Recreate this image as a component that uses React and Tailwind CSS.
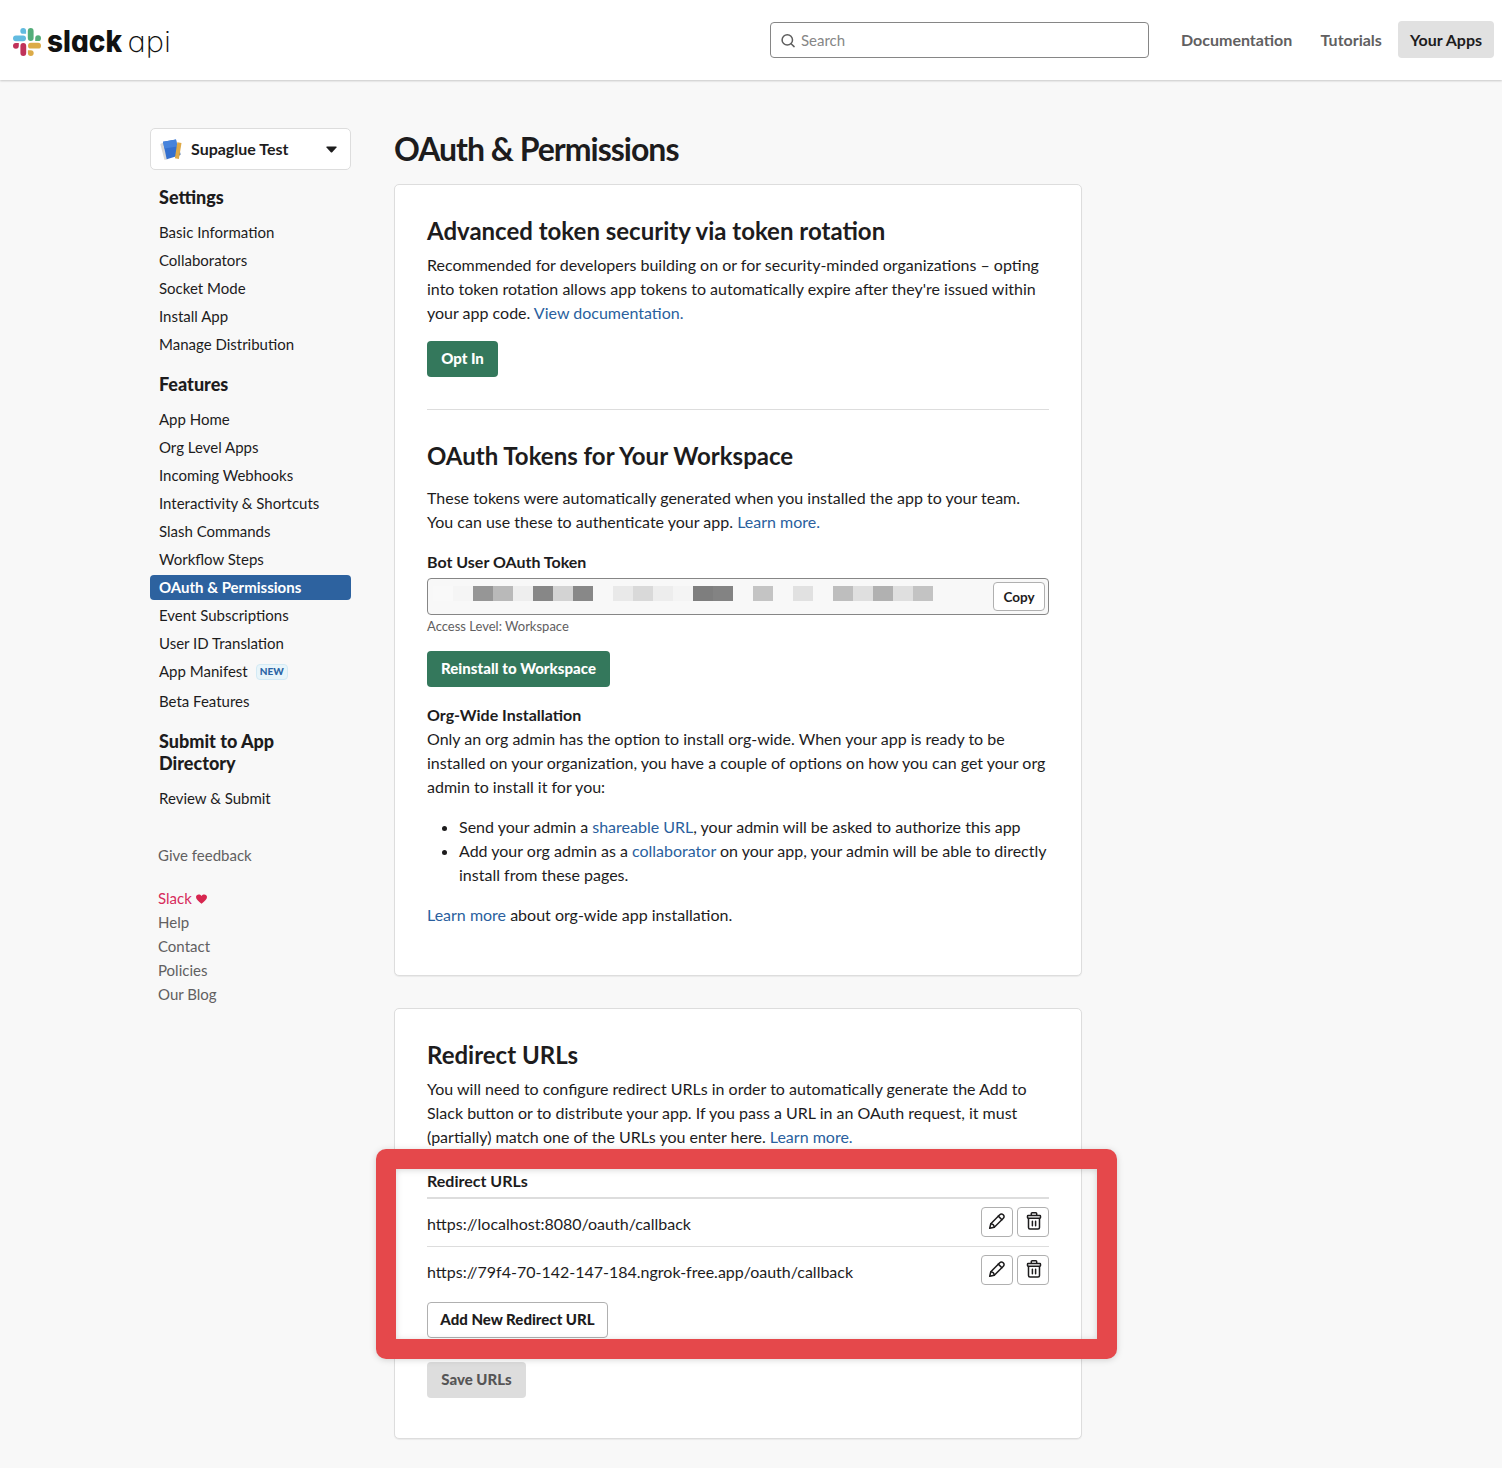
import React from "react";

const LINK = "text-[#2a5f9e]";

function Logo() {
  return (
    <div className="flex h-20 w-[180px] shrink-0 items-center pl-[13px]">
      <svg className="mt-1 h-[28px] w-[28px] shrink-0" viewBox="0 0 28 28">
        <g fill="#62bbe0">
          <rect x="0" y="7.4" width="13" height="5.8" rx="2.9" />
          <path d="M10.2 0a2.9 2.9 0 0 1 2.9 2.9v2.9h-2.9a2.9 2.9 0 0 1 0-5.8z" />
        </g>
        <g fill="#54ad7a">
          <rect x="14.8" y="0" width="5.8" height="13" rx="2.9" />
          <path d="M28 10.2a2.9 2.9 0 0 1-2.9 2.9h-2.9v-2.9a2.9 2.9 0 0 1 5.8 0z" />
        </g>
        <g fill="#dcab48">
          <rect x="15" y="14.8" width="13" height="5.8" rx="2.9" />
          <path d="M17.8 28a2.9 2.9 0 0 1-2.9-2.9v-2.9h2.9a2.9 2.9 0 0 1 0 5.8z" />
        </g>
        <g fill="#c0325a">
          <rect x="7.4" y="15" width="5.8" height="13" rx="2.9" />
          <path d="M0 17.8a2.9 2.9 0 0 1 2.9-2.9h2.9v2.9a2.9 2.9 0 0 1-5.8 0z" />
        </g>
      </svg>
      <svg className="h-[50px] w-[135px] shrink-0 font-['Inter',sans-serif] [font-feature-settings:'cv11']" viewBox="0 0 135 50">
        <text x="6" y="36.500" textLength="75" lengthAdjust="spacingAndGlyphs" fontWeight="800" fontSize="30" fill="#111">slack</text>
        <text x="86.500" y="36.500" textLength="43.500" lengthAdjust="spacingAndGlyphs" fontWeight="200" fontSize="29" fill="#111">api</text>
      </svg>
    </div>
  );
}

function Header() {
  return (
    <header className="flex h-20 items-center bg-white shadow-[0_1px_2px_rgba(0,0,0,0.2)]">
      <Logo />
      <div className="ml-auto flex h-9 w-[379px] items-center rounded border border-[#868686] bg-white pl-[10px]">
        <svg className="h-[15px] w-[15px]" viewBox="0 0 15 15" fill="none" stroke="#5e5e5e" strokeWidth="1.5" strokeLinecap="round">
          <circle cx="6.3" cy="6.9" r="5.2" />
          <path d="M10.1 10.8l3 2.800" />
        </svg>
        <span className="ml-[5px] text-[15px] text-[#868686]">Search</span>
      </div>
      <nav className="mr-2 ml-8 flex items-center text-base font-bold text-[#616061]">
        <span className="w-[111px] whitespace-nowrap">Documentation</span>
        <span className="ml-[28.5px] w-[61.5px] whitespace-nowrap">Tutorials</span>
        <span className="mb-px ml-4 flex h-[37px] w-24 items-center justify-center rounded bg-[#e1e1e1] pt-px whitespace-nowrap text-[#1d1c1d]">Your Apps</span>
      </nav>
    </header>
  );
}

function NavGroup({ title, items }) {
  return (
    <>
      <h3 className="pl-[9px] text-[18px] leading-[22px] font-black">{title}</h3>
      <ul className="mt-3 mb-4 text-[15px] leading-[25px]">
        {items.map((item) => (
          <li key={item} className={item === "OAuth & Permissions" ? "mb-[3px] rounded bg-[#2d629f] pl-[9px] font-bold text-white" : item === "App Manifest" ? "mb-[5px] flex items-center pl-[9px]" : "mb-[3px] pl-[9px]"}>
            {item}
            {item === "App Manifest" && (
              <span className="ml-2 flex h-4 w-8 items-center justify-center rounded border border-[#d3eaf5] bg-[#e8f5fa] text-[10px] font-black text-[#2a64a5]">NEW</span>
            )}
          </li>
        ))}
      </ul>
    </>
  );
}

function Sidebar() {
  return (
    <aside className="w-[201px] shrink-0">
      <div className="flex h-[42px] items-center rounded-[5px] border border-[#ddd] bg-white pl-[9px]">
        <svg className="mt-px h-[22px] w-[22px]" viewBox="0 0 22 22">
          <path d="M0.300 5l3-1.500 5 16.500-3.800 1z" fill="#d8d8d8" />
          <path d="M18 5l2.600 10.500-1 1-3-1z" fill="#4d6f9e" />
          <path d="M3 2.700L16 0.500 19 16.500 6.700 20.300z" fill="#3470cf" />
          <path d="M3 2.700L16 0.500 17.300 7.500 4.400 9.500z" fill="#4683dc" />
          <path d="M17.300 3.300l4.200 0.600-2.600 16-4-0.700z" fill="#dfaa48" />
        </svg>
        <span className="ml-[9px] text-base font-bold">Supaglue Test</span>
        <svg className="mt-px mr-[13px] ml-auto h-[7px] w-[11px]" viewBox="0 0 11 7"><path d="M1 .5h9q1 .2.500 1L6.200 6.200q-.7.700-1.400 0L.5 1.500Q0 .7 1 .5z" fill="#1d1c1d" /></svg>
      </div>
      <div className="mt-4">
        <NavGroup title="Settings" items={["Basic Information", "Collaborators", "Socket Mode", "Install App", "Manage Distribution"]} />
        <NavGroup title="Features" items={["App Home", "Org Level Apps", "Incoming Webhooks", "Interactivity & Shortcuts", "Slash Commands", "Workflow Steps", "OAuth & Permissions", "Event Subscriptions", "User ID Translation", "App Manifest", "Beta Features"]} />
        <NavGroup title={<>Submit to App<br />Directory</>} items={["Review & Submit"]} />
      </div>
      <div className="mt-8 pl-2 text-[15px] leading-6 text-[#616061]">
        <p>Give feedback</p>
        <p className="mt-[19px] flex items-center text-[#d72b5c]">
          Slack
          <svg className="mt-px ml-1 h-[10px] w-[11px]" viewBox="0 0 11 10"><path d="M5.500 9.700C2.500 7.200 0 5.400 0 3 0 .2 3.800-.5 5.500 2 7.200-.5 11 .2 11 3c0 2.400-2.500 4.200-5.500 6.700z" fill="#d7264f" /></svg>
        </p>
        <p>Help</p>
        <p>Contact</p>
        <p>Policies</p>
        <p>Our Blog</p>
      </div>
    </aside>
  );
}

function Button({ className, children }) {
  return <div className={"flex h-9 items-center justify-center rounded pb-[2px] text-[15px] font-black whitespace-nowrap " + className}>{children}</div>;
}

const BLOCKS = ["#f9f9f9", "#f5f5f5", "#969696", "#b9b9b9", "#eeeeee", "#878787", "#d3d3d3", "#888888", "#f8f8f8", "#e9e9e9", "#d9d9d9", "#ededed", "#f4f4f4", "#7e7e7e", "#838383", "#f8f8f8", "#c4c4c4", "#f8f8f8", "#e1e1e1", "#f8f8f8", "#bebebe", "#dfdfdf", "#b1b1b1", "#dfdfdf", "#c3c3c3"];

function IconButtons() {
  return (
    <div className="ml-auto flex gap-1">
      <div className="flex h-[30px] w-8 items-center justify-center rounded border border-[#b0b0b0]">
        <svg className="mb-[2px] h-[18px] w-[18px]" viewBox="0 0 18 18" fill="none" stroke="#1d1c1d" strokeWidth="1.500" strokeLinejoin="round" strokeLinecap="round">
          <path d="M1.700 16.300l1.100-4.500 8.700-8.900q1.900-1.900 3.700-.1t-.1 3.700l-8.800 8.700z" />
          <path d="M10.300 4.100l3.600 3.600M2.900 11.700q3.100.3 3.400 3.400" />
        </svg>
      </div>
      <div className="flex h-[30px] w-8 items-center justify-center rounded border border-[#b0b0b0]">
        <svg className="mb-[2px] ml-px h-[18px] w-[16px]" viewBox="0 0 16 18" fill="none" stroke="#1d1c1d" strokeWidth="1.500" strokeLinejoin="round" strokeLinecap="round">
          <path d="M5.300 3.500V1.700q0-.9.900-.9h3.600q.9 0 .9.900v1.800M2.100 3.600h11.800q.6 0 .6.600v1.400q0 .6-.6.600H2.100q-.6 0-.6-.6V4.200q0-.6.600-.6z" />
          <path d="M2.500 6.400v9.200q0 1.500 1.500 1.500h8q1.500 0 1.500-1.500V6.400M6.400 9.300v4.500M9.600 9.300v4.500" />
        </svg>
      </div>
    </div>
  );
}

function TokensCard() {
  return (
    <section className="h-[792px] rounded-[5px] border border-[#ddd] bg-white px-8 pt-[31px] shadow-[0_1px_1px_rgba(0,0,0,0.06)]">
      <h2 className="text-2xl leading-[29px] font-bold">Advanced token security via token rotation</h2>
      <p className="mt-2 whitespace-nowrap">
        Recommended for developers building on or for security-minded organizations – opting<br />
        into token rotation allows app tokens to automatically expire after they're issued within<br />
        your app code. <span className={LINK}>View documentation.</span>
      </p>
      <Button className="mt-4 w-[71px] bg-[#34785c] text-white">Opt In</Button>
      <div className="mt-8 h-px bg-[#ddd]" />
      <h2 className="mt-[31px] text-2xl leading-[29px] font-bold">OAuth Tokens for Your Workspace</h2>
      <p className="mt-4 whitespace-nowrap">
        These tokens were automatically generated when you installed the app to your team.<br />
        You can use these to authenticate your app. <span className={LINK}>Learn more.</span>
      </p>
      <p className="mt-4 font-bold">Bot User OAuth Token</p>
      <div className="mt-1 flex h-[37px] items-center rounded border border-[#868686] bg-[#f8f8f8] pr-[3px] pl-[5px]">
        <div className="mb-[6px] flex h-[15px]">
          {BLOCKS.map((c, i) => (
            <div key={i} className="w-5" style={{ backgroundColor: c }} />
          ))}
        </div>
        <div className="ml-auto flex h-[29px] w-[52px] items-center justify-center rounded border border-[#b0b0b0] bg-white text-[13.5px] font-bold">Copy</div>
      </div>
      <p className="-mt-px text-[13px] text-[#616061]">Access Level: Workspace</p>
      <Button className="mt-[13px] w-[183px] bg-[#34785c] tracking-[0.05px] text-white">Reinstall to Workspace</Button>
      <p className="mt-4 font-bold">Org-Wide Installation</p>
      <p className="whitespace-nowrap">
        Only an org admin has the option to install org-wide. When your app is ready to be<br />
        installed on your organization, you have a couple of options on how you can get your org<br />
        admin to install it for you:
      </p>
      <ul className="mt-4 list-disc pl-8 whitespace-nowrap">
        <li>Send your admin a <span className={LINK}>shareable URL</span>, your admin will be asked to authorize this app</li>
        <li>Add your org admin as a <span className={LINK}>collaborator</span> on your app, your admin will be able to directly<br />install from these pages.</li>
      </ul>
      <p className="mt-4"><span className={LINK}>Learn more</span> about org-wide app installation.</p>
    </section>
  );
}

function RedirectCard() {
  return (
    <section className="relative mt-8 h-[431px] rounded-[5px] border border-[#ddd] bg-white px-8 pt-[31px] shadow-[0_1px_1px_rgba(0,0,0,0.06)]">
      <h2 className="text-2xl leading-[29px] font-bold">Redirect URLs</h2>
      <p className="mt-2 whitespace-nowrap">
        You will need to configure redirect URLs in order to automatically generate the Add to<br />
        Slack button or to distribute your app. If you pass a URL in an OAuth request, it must<br />
        (partially) match one of the URLs you enter here. <span className={LINK}>Learn more.</span>
      </p>
      <div className="mt-5 border-b-2 border-[#ddd] pb-1 font-bold">Redirect URLs</div>
      <div className="flex h-12 items-start border-b border-[#ddd] pt-2">
        <span className="pt-[5px]">https://localhost:8080/oauth/callback</span>
        <IconButtons />
      </div>
      <div className="flex h-[55px] items-start pt-2">
        <span className="pt-[5px]">https://79f4-70-142-147-184.ngrok-free.app/oauth/callback</span>
        <IconButtons />
      </div>
      <Button className="w-[181px] border border-[#b0b0b0]">Add New Redirect URL</Button>
      <Button className="mt-6 w-[99px] bg-[#ddd] text-[#565556]">Save URLs</Button>
      <div className="absolute top-[140px] -left-[19px] h-[210px] w-[741px] rounded-[10px] drop-shadow-[0_1px_3px_rgba(0,0,0,0.16)]">
        <div className="flex h-full flex-col">
          <div className="h-5 rounded-t-[10px] bg-[#e5484b]" />
          <div className="flex grow justify-between">
            <div className="w-5 bg-[#e5484b]" />
            <div className="w-5 bg-[#e5484b]" />
          </div>
          <div className="h-5 rounded-b-[10px] bg-[#e5484b]" />
        </div>
      </div>
    </section>
  );
}

export default function App() {
  return (
    <div className="h-[1468px] w-[1502px] overflow-hidden bg-[#f8f8f8] font-['Lato',sans-serif] text-base leading-6 text-[#1d1c1d]">
      <Header />
      <div className="flex pt-12 pl-[150px]">
        <Sidebar />
        <main className="ml-[43px] w-[688px]">
          <h1 className="mb-[15px] pt-px text-[32px] leading-10 font-bold tracking-[-1px]">OAuth &amp; Permissions</h1>
          <TokensCard />
          <RedirectCard />
        </main>
      </div>
    </div>
  );
}
